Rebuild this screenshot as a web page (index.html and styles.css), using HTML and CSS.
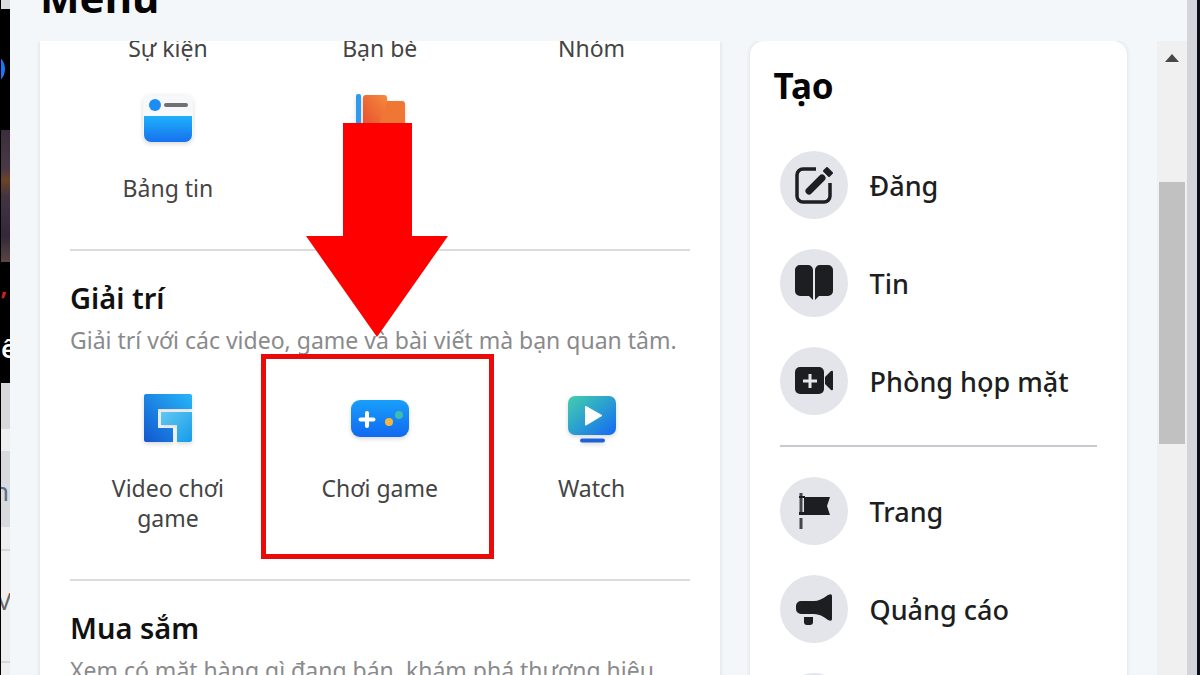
FILE: index.html
```html
<!DOCTYPE html>
<html lang="vi">
<head>
    <meta charset="UTF-8">
    <meta name="viewport" content="width=device-width, initial-scale=1.0">
    <title>Menu</title>
    <link rel="stylesheet" href="styles.css">
</head>
<body>
    <!-- Page behind the menu -->
    <div class="behind">
        <div class="strip strip-top"></div>
        <div class="strip strip-cover"><span class="dot"></span></div>
        <div class="strip strip-photo"></div>
        <div class="strip strip-caption"><span class="mark">’</span><span>ể</span></div>
        <div class="strip strip-grey"></div>
        <div class="strip strip-light"></div>
        <div class="strip strip-blue">n</div>
        <div class="strip strip-light"></div>
        <div class="strip strip-row">V</div>
        <div class="strip strip-row"></div>
    </div>

    <main class="panel">
        <header class="panel-header">
            <h1>Menu</h1>
        </header>
        <div class="panel-body">
            <div class="cards">
                <section class="card apps">
                    <div class="grid grid-first">
                        <a class="tile" href="#">Sự kiện</a>
                        <a class="tile" href="#">Bạn bè</a>
                        <a class="tile" href="#">Nhóm</a>
                        <a class="tile" href="#">
                            <svg class="icon" viewBox="0 0 60 50">
                                <defs>
                                    <linearGradient id="feed" x1="0" y1="0" x2="0" y2="1"><stop offset="0" stop-color="#1fb0fa"/><stop offset="1" stop-color="#1672ee"/></linearGradient>
                                </defs>
                                <rect x="5" y="1" width="50" height="48" rx="8" fill="#f7f8f9"/>
                                <path d="M6 23h48v19a7 7 0 0 1-7 7H13a7 7 0 0 1-7-7z" fill="url(#feed)"/>
                                <circle cx="17" cy="12" r="6" fill="#1c8df3"/>
                                <path d="M28 12h20" stroke="#717171" stroke-width="4" stroke-linecap="round"/>
                            </svg>
                            <span>Bảng tin</span>
                        </a>
                        <a class="tile" href="#" aria-label="Trang">
                            <svg class="icon" viewBox="0 0 60 50">
                                <defs>
                                    <linearGradient id="flag" x1="1" y1="0" x2="0" y2="1"><stop offset="0" stop-color="#f58a3c"/><stop offset="1" stop-color="#e8502f"/></linearGradient>
                                </defs>
                                <rect x="6" y="1" width="5" height="48" rx="2" fill="#2f9bf0"/>
                                <path d="M34 8h18a3 3 0 0 1 3 3v27H28z" fill="#f07633"/>
                                <path d="M13 5a3 3 0 0 1 3-3h18a3 3 0 0 1 3 3v4L29 32H13z" fill="url(#flag)"/>
                            </svg>
                        </a>
                    </div>

                    <div class="group">
                        <h2>Giải trí</h2>
                        <p>Giải trí với các video, game và bài viết mà bạn quan tâm.</p>
                    </div>
                    <div class="grid">
                        <a class="tile" href="#">
                            <svg class="icon" viewBox="0 0 60 50">
                                <defs>
                                    <linearGradient id="gv" x1="1" y1="0" x2="0" y2="1"><stop offset="0" stop-color="#27b6f8"/><stop offset="1" stop-color="#1256d0"/></linearGradient>
                                    <linearGradient id="gv2" x1="0" y1="0" x2="1" y2="1"><stop offset="0" stop-color="#62c8f2"/><stop offset="1" stop-color="#159be8"/></linearGradient>
                                </defs>
                                <path d="M8 1h44a2 2 0 0 1 2 2v13H20v19h15v14H8a2 2 0 0 1-2-2V3a2 2 0 0 1 2-2z" fill="url(#gv)"/>
                                <path d="M23 19h31v28a2 2 0 0 1-2 2H39V32H23z" fill="url(#gv2)"/>
                            </svg>
                            <span>Video chơi game</span>
                        </a>
                        <a class="tile tile-marked" href="#">
                            <svg class="icon" viewBox="0 0 60 50">
                                <defs>
                                    <linearGradient id="pad" x1="0" y1="0" x2="0" y2="1"><stop offset="0" stop-color="#18a0fa"/><stop offset="1" stop-color="#1168f1"/></linearGradient>
                                </defs>
                                <rect x="1" y="7" width="58" height="37" rx="9" fill="url(#pad)"/>
                                <path d="M17 20v13M10.500 26.500h13" stroke="#fff" stroke-width="4" stroke-linecap="round"/>
                                <circle cx="39" cy="29" r="4" fill="#f5b83d"/>
                                <circle cx="49" cy="22" r="4" fill="#40bcae"/>
                            </svg>
                            <span>Chơi game</span>
                            <svg class="arrow" viewBox="0 0 142 214" aria-hidden="true">
                                <path d="M37 0h69v113h36L71 214 0 113h37z" fill="#f00"/>
                            </svg>
                        </a>
                        <a class="tile" href="#">
                            <svg class="icon" viewBox="0 0 60 50">
                                <defs>
                                    <linearGradient id="tv" x1="0" y1="0" x2="1" y2="1"><stop offset="0" stop-color="#44cfae"/><stop offset=".5" stop-color="#2a9fd0"/><stop offset="1" stop-color="#1467f5"/></linearGradient>
                                </defs>
                                <rect x="6" y="3" width="48" height="39" rx="7" fill="url(#tv)"/>
                                <path d="M24 14l15 8.500-15 9z" fill="#fff" stroke="#fff" stroke-width="2" stroke-linejoin="round"/>
                                <path d="M20 47.500h21" stroke="#1a63db" stroke-width="4" stroke-linecap="round"/>
                            </svg>
                            <span>Watch</span>
                        </a>
                    </div>

                    <div class="group">
                        <h2>Mua sắm</h2>
                        <p>Xem có mặt hàng gì đang bán, khám phá thương hiệu</p>
                    </div>
                </section>

                <section class="card create">
                    <h2>Tạo</h2>
                    <ul>
                        <li><a href="#">
                            <span class="circle"><svg viewBox="0 0 40 40">
                                <path d="M22 4H9a6 6 0 0 0-6 6v21a6 6 0 0 0 6 6h21a6 6 0 0 0 6-6V18" fill="none" stroke="#1c1e21" stroke-width="3.500"/>
                                <path d="M15 26L28 13" stroke="#1c1e21" stroke-width="7" stroke-linecap="round"/>
                                <path d="M33 3l5 5-3 3-5-5z" fill="#1c1e21" stroke="#1c1e21" stroke-width="2" stroke-linejoin="round"/>
                            </svg></span>
                            Đăng
                        </a></li>
                        <li><a href="#">
                            <span class="circle"><svg viewBox="0 0 40 40">
                                <path d="M6 2h8a5 5 0 0 1 5 5v30l-4-4H6a5 5 0 0 1-5-5V7a5 5 0 0 1 5-5zM34 2h-8a5 5 0 0 0-5 5v30l4-4h9a5 5 0 0 0 5-5V7a5 5 0 0 0-5-5z" fill="#1c1e21"/>
                            </svg></span>
                            Tin
                        </a></li>
                        <li><a href="#">
                            <span class="circle"><svg viewBox="0 0 40 40">
                                <rect x="1" y="6" width="29" height="27" rx="5" fill="#1c1e21"/>
                                <path d="M31 16l6-6q2-1 2 1v17q0 2-2 1l-6-6z" fill="#1c1e21"/>
                                <path d="M16 13v14M9 20h14" stroke="#e4e6eb" stroke-width="3"/>
                            </svg></span>
                            Phòng họp mặt
                        </a></li>
                    </ul>
                    <hr>
                    <ul>
                        <li><a href="#">
                            <span class="circle"><svg viewBox="0 0 40 40">
                                <path d="M7 2v36" stroke="#44464a" stroke-width="3" stroke-dasharray="3 2 16 4 11"/>
                                <path d="M10 6h26l-3 9 3 9H5v-3h5z" fill="#1c1e21"/>
                                <path d="M5 6h6" stroke="#1c1e21" stroke-width="2"/>
                            </svg></span>
                            Trang
                        </a></li>
                        <li><a href="#">
                            <span class="circle"><svg viewBox="0 0 40 40">
                                <path d="M7 12h13q6 0 14-6 4-2 4 1v23q0 3-4 1-7-6-14-6H7a5 5 0 0 1-5-5v-3a5 5 0 0 1 5-5z" fill="#1c1e21"/>
                                <path d="M10 28h9v5a3 3 0 0 1-3 3h-3a3 3 0 0 1-3-3z" fill="#1c1e21"/>
                            </svg></span>
                            Quảng cáo
                        </a></li>
                        <li><a href="#" aria-label="Nhóm"><span class="circle"></span></a></li>
                    </ul>
                </section>
            </div>
            <div class="scrollbar">
                <span class="scroll-up"></span>
                <span class="thumb"></span>
            </div>
        </div>
    </main>
    <div class="edge"></div>
</body>
</html>
```

FILE: styles.css
```css
* {
    box-sizing: border-box;
}
body {
    font-family: "Noto Sans", "Open Sans", sans-serif;
    background: #f4f7fa;
    color: #1c1e21;
    display: flex;
    height: 100vh;
    margin: 0;
    overflow: hidden;
}
a {
    color: inherit;
    text-decoration: none;
}
h1, h2, p, ul {
    margin: 0;
    padding: 0;
}

/* page behind */
.behind {
    flex: 0 0 10px;
    display: flex;
    flex-direction: column;
    border-left: 1px solid #000;
    overflow: hidden;
}
.strip {
    flex: none;
    overflow: hidden;
    background: #efefef;
}
.strip-top {
    height: 9px;
    background: #dcdcdc;
}
.strip-cover {
    height: 121px;
    padding-top: 44px;
    background: #000;
}
.dot {
    display: block;
    width: 32px;
    height: 32px;
    margin-left: -28px;
    border-radius: 50%;
    background: #1877f2;
}
.strip-photo {
    height: 132px;
    background: linear-gradient(#3b2d3c, #4a3a45 30%, #6b4425 38%, #433443 50%, #33283a 80%, #5b4544);
}
.strip-caption {
    display: flex;
    flex-direction: column;
    height: 121px;
    padding-top: 20px;
    background: #000;
    color: #fff;
    font-size: 26px;
    font-weight: 600;
    line-height: 36px;
}
.mark {
    height: 48px;
    color: #c22;
}
.strip-grey {
    height: 46px;
    background: #d8d8da;
}
.strip-light {
    height: 22px;
}
.strip-blue {
    height: 76px;
    background: #d8dade;
    color: #5b6f86;
    font-size: 26px;
    line-height: 80px;
    text-indent: -8px;
}
.strip-row {
    height: 112px;
    border-top: 2px solid #d6d6d6;
    color: #666;
    font-size: 24px;
    line-height: 100px;
    text-indent: -4px;
}

/* menu */
.panel {
    flex: 1;
    min-width: 0;
    display: flex;
    flex-direction: column;
}
.panel-header {
    display: flex;
    align-items: flex-end;
    height: 41px;
    padding: 0 30px 16px;
}
h1 {
    color: #050505;
    font-size: 42px;
    line-height: 56px;
}
.panel-body {
    flex: 1;
    min-height: 0;
    display: flex;
}
.cards {
    flex: 1;
    display: grid;
    grid-template-columns: 9fr 5fr;
    gap: 30px;
    padding: 0 30px;
    overflow: hidden;
}
.card {
    min-width: 0;
    background: #fff;
    box-shadow: 0 0 4px rgba(0, 0, 0, 0.12);
}
.apps {
    padding: 0 22px;
}
.grid {
    display: grid;
    grid-template-columns: repeat(3, 1fr);
    row-gap: 30px;
    padding: 38px 0 46px;
}
.grid-first {
    margin-top: -8px;
    padding-top: 0;
}
.tile {
    display: flex;
    flex-direction: column;
    align-items: center;
    gap: 30px;
    padding: 0 40px;
    color: #444;
    font-size: 23px;
    line-height: 30px;
    text-align: center;
}
.icon {
    width: 60px;
    height: 50px;
    filter: drop-shadow(0 2px 2px rgba(0, 0, 0, 0.15));
}
.group {
    margin: 0 8px;
    padding-top: 28px;
    border-top: 2px solid #dcdcdc;
}
.group h2 {
    margin-bottom: 8px;
    color: #111;
    font-size: 29px;
    font-weight: 600;
    line-height: 38px;
}
.group p {
    color: #8a8a8c;
    font-size: 23px;
    line-height: 30px;
    white-space: nowrap;
}

/* highlight on the chosen tile */
.tile-marked {
    position: relative;
}
.tile-marked::after {
    content: "";
    position: absolute;
    inset: -39px -8px -26px -13px;
    border: 5px solid #ea0a0a;
}
.arrow {
    position: absolute;
    top: -270px;
    left: 32px;
    width: 142px;
    height: 214px;
}

.create {
    padding: 23px 24px 0;
    border-radius: 14px 14px 0 0;
}
.create h2 {
    margin-bottom: 43px;
    color: #050505;
    font-size: 35px;
    line-height: 44px;
}
.create ul {
    display: flex;
    flex-direction: column;
    gap: 30px;
    padding: 0 6px;
    list-style: none;
}
.create li a {
    display: flex;
    align-items: center;
    gap: 22px;
    font-size: 27px;
    font-weight: 500;
}
.create hr {
    margin: 30px 6px;
    border: 0;
    border-top: 2px solid #c8cacf;
}
.circle {
    display: flex;
    align-items: center;
    justify-content: center;
    width: 68px;
    height: 68px;
    border-radius: 50%;
    background: #e4e5eb;
}
.circle svg {
    width: 40px;
    height: 40px;
}

/* scrollbar */
.scrollbar {
    flex: 0 0 30px;
    display: flex;
    flex-direction: column;
    align-items: center;
    padding-top: 13px;
    background: #f0f0f0;
}
.scroll-up {
    border: 7px solid transparent;
    border-top: 0;
    border-bottom: 8px solid #484848;
}
.thumb {
    width: 26px;
    height: 262px;
    margin-top: 120px;
    background: #c1c1c1;
}
.edge {
    flex: 0 0 13px;
    background: #d3d5da;
    border-right: 3px solid #0b0d18;
}
```
